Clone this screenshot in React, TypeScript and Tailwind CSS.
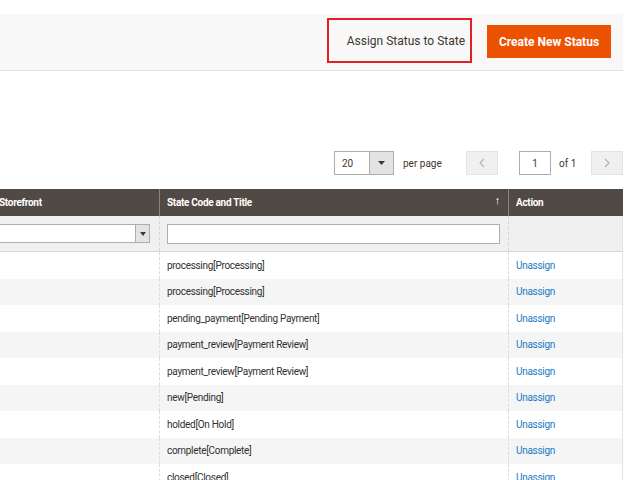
import React from "react";

const rows = [
  "processing[Processing]",
  "processing[Processing]",
  "pending_payment[Pending Payment]",
  "payment_review[Payment Review]",
  "payment_review[Payment Review]",
  "new[Pending]",
  "holded[On Hold]",
  "complete[Complete]",
  "closed[Closed]",
];

export default function App() {
  return (
    <div
      className="w-[640px] h-[480px] overflow-hidden bg-white"
      style={{ fontFamily: "Roboto, 'Liberation Sans', sans-serif" }}
    >
      <div className="h-[14px]" />
      <div className="w-[623px] h-[57px] bg-[#f8f8f8] border-b border-[#e3e3e3] flex items-start justify-end pr-[12px]">
        <div className="mt-[4px] w-[145px] h-[45px] border-2 border-[#e31e24] flex items-center justify-end pr-[5px] text-[12px] text-[#41362f]">
          Assign Status to State
        </div>
        <div className="ml-[15px] mt-[11px] w-[124px] h-[33px] bg-[#eb5202] flex items-center justify-center text-white font-bold text-[12px]">
          Create New Status
        </div>
      </div>
      <div className="h-[80px]" />
      <div className="w-[623px] h-[24px] flex items-center justify-end text-[10px] text-[#41362f]">
        <div className="w-[60px] h-[24px] border border-[#adadad] flex">
          <div className="flex-1 flex items-center pl-[7px]">20</div>
          <div className="w-[24px] bg-[#e3e3e3] border-l border-[#adadad] flex items-center justify-center">
            <svg width="7" height="4" viewBox="0 0 7 4"><path d="M0 0H7L3.5 4Z" fill="#41362f" /></svg>
          </div>
        </div>
        <div className="ml-[9px] w-[63px]">per page</div>
        <div className="w-[32px] h-[24px] bg-[#f0f0f0] border border-[#e3e3e3] flex items-center justify-center text-[#b5b5b5]">
          <svg width="6" height="10" viewBox="0 0 6 10"><path d="M5 1L1 5L5 9" stroke="#b5b5b5" fill="none" strokeWidth="1.2" /></svg>
        </div>
        <div className="ml-[21px] w-[32px] h-[24px] border border-[#adadad] flex items-center justify-center">1</div>
        <div className="ml-[8px] w-[32px]">of 1</div>
        <div className="w-[32px] h-[24px] bg-[#f0f0f0] border border-[#e3e3e3] flex items-center justify-center">
          <svg width="6" height="10" viewBox="0 0 6 10"><path d="M1 1L5 5L1 9" stroke="#b5b5b5" fill="none" strokeWidth="1.2" /></svg>
        </div>
      </div>
      <div className="h-[14px]" />
      <div className="-ml-[8px] w-[631px] text-[10px] tracking-[-0.3px]">
        <div className="h-[27px] bg-[#514943] text-white font-bold flex">
          <div className="w-[168px] pl-[7px] flex items-center border-r border-[#8a837f]">Storefront</div>
          <div className="w-[349px] pl-[7px] pr-[8px] flex justify-between border-r border-[#8a837f]">
            <span className="self-center">State Code and Title</span>
            <span className="font-normal text-[11px] mt-[4px]">↑</span>
          </div>
          <div className="flex-1 pl-[7px] flex items-center">Action</div>
        </div>
        <div className="h-[36px] bg-[#f0f0f0] flex border-b border-[#d6d6d6]">
          <div className="w-[168px] border-r border-dashed border-[#d6d6d6] flex items-center pr-[9px]">
            <div className="w-full h-[19px] bg-white border border-[#adadad] flex justify-end">
              <div className="w-[14px] bg-[#e3e3e3] border-l border-[#adadad] flex items-center justify-center">
                <svg width="6" height="4" viewBox="0 0 6 4"><path d="M0 0H6L3 4Z" fill="#41362f" /></svg>
              </div>
            </div>
          </div>
          <div className="w-[349px] border-r border-dashed border-[#d6d6d6] flex items-center pl-[7px] pr-[8px]">
            <div className="w-full h-[20px] bg-white border border-[#adadad]" />
          </div>
          <div className="flex-1 border-r border-[#e3e3e3]" />
        </div>
        {rows.map((r, i) => (
          <div
            key={i}
            className={`h-[26.5px] flex ${i % 2 === 1 ? "bg-[#f5f5f5]" : "bg-white"}`}
          >
            <div className="w-[168px] border-r border-dashed border-[#dcdcdc]" />
            <div className="w-[349px] pl-[7px] flex items-center text-[#303030] border-r border-dashed border-[#dcdcdc]">
              {r}
            </div>
            <div className="flex-1 pl-[7px] flex items-center text-[#1979c3] border-r border-[#e3e3e3]">
              Unassign
            </div>
          </div>
        ))}
      </div>
    </div>
  );
}
